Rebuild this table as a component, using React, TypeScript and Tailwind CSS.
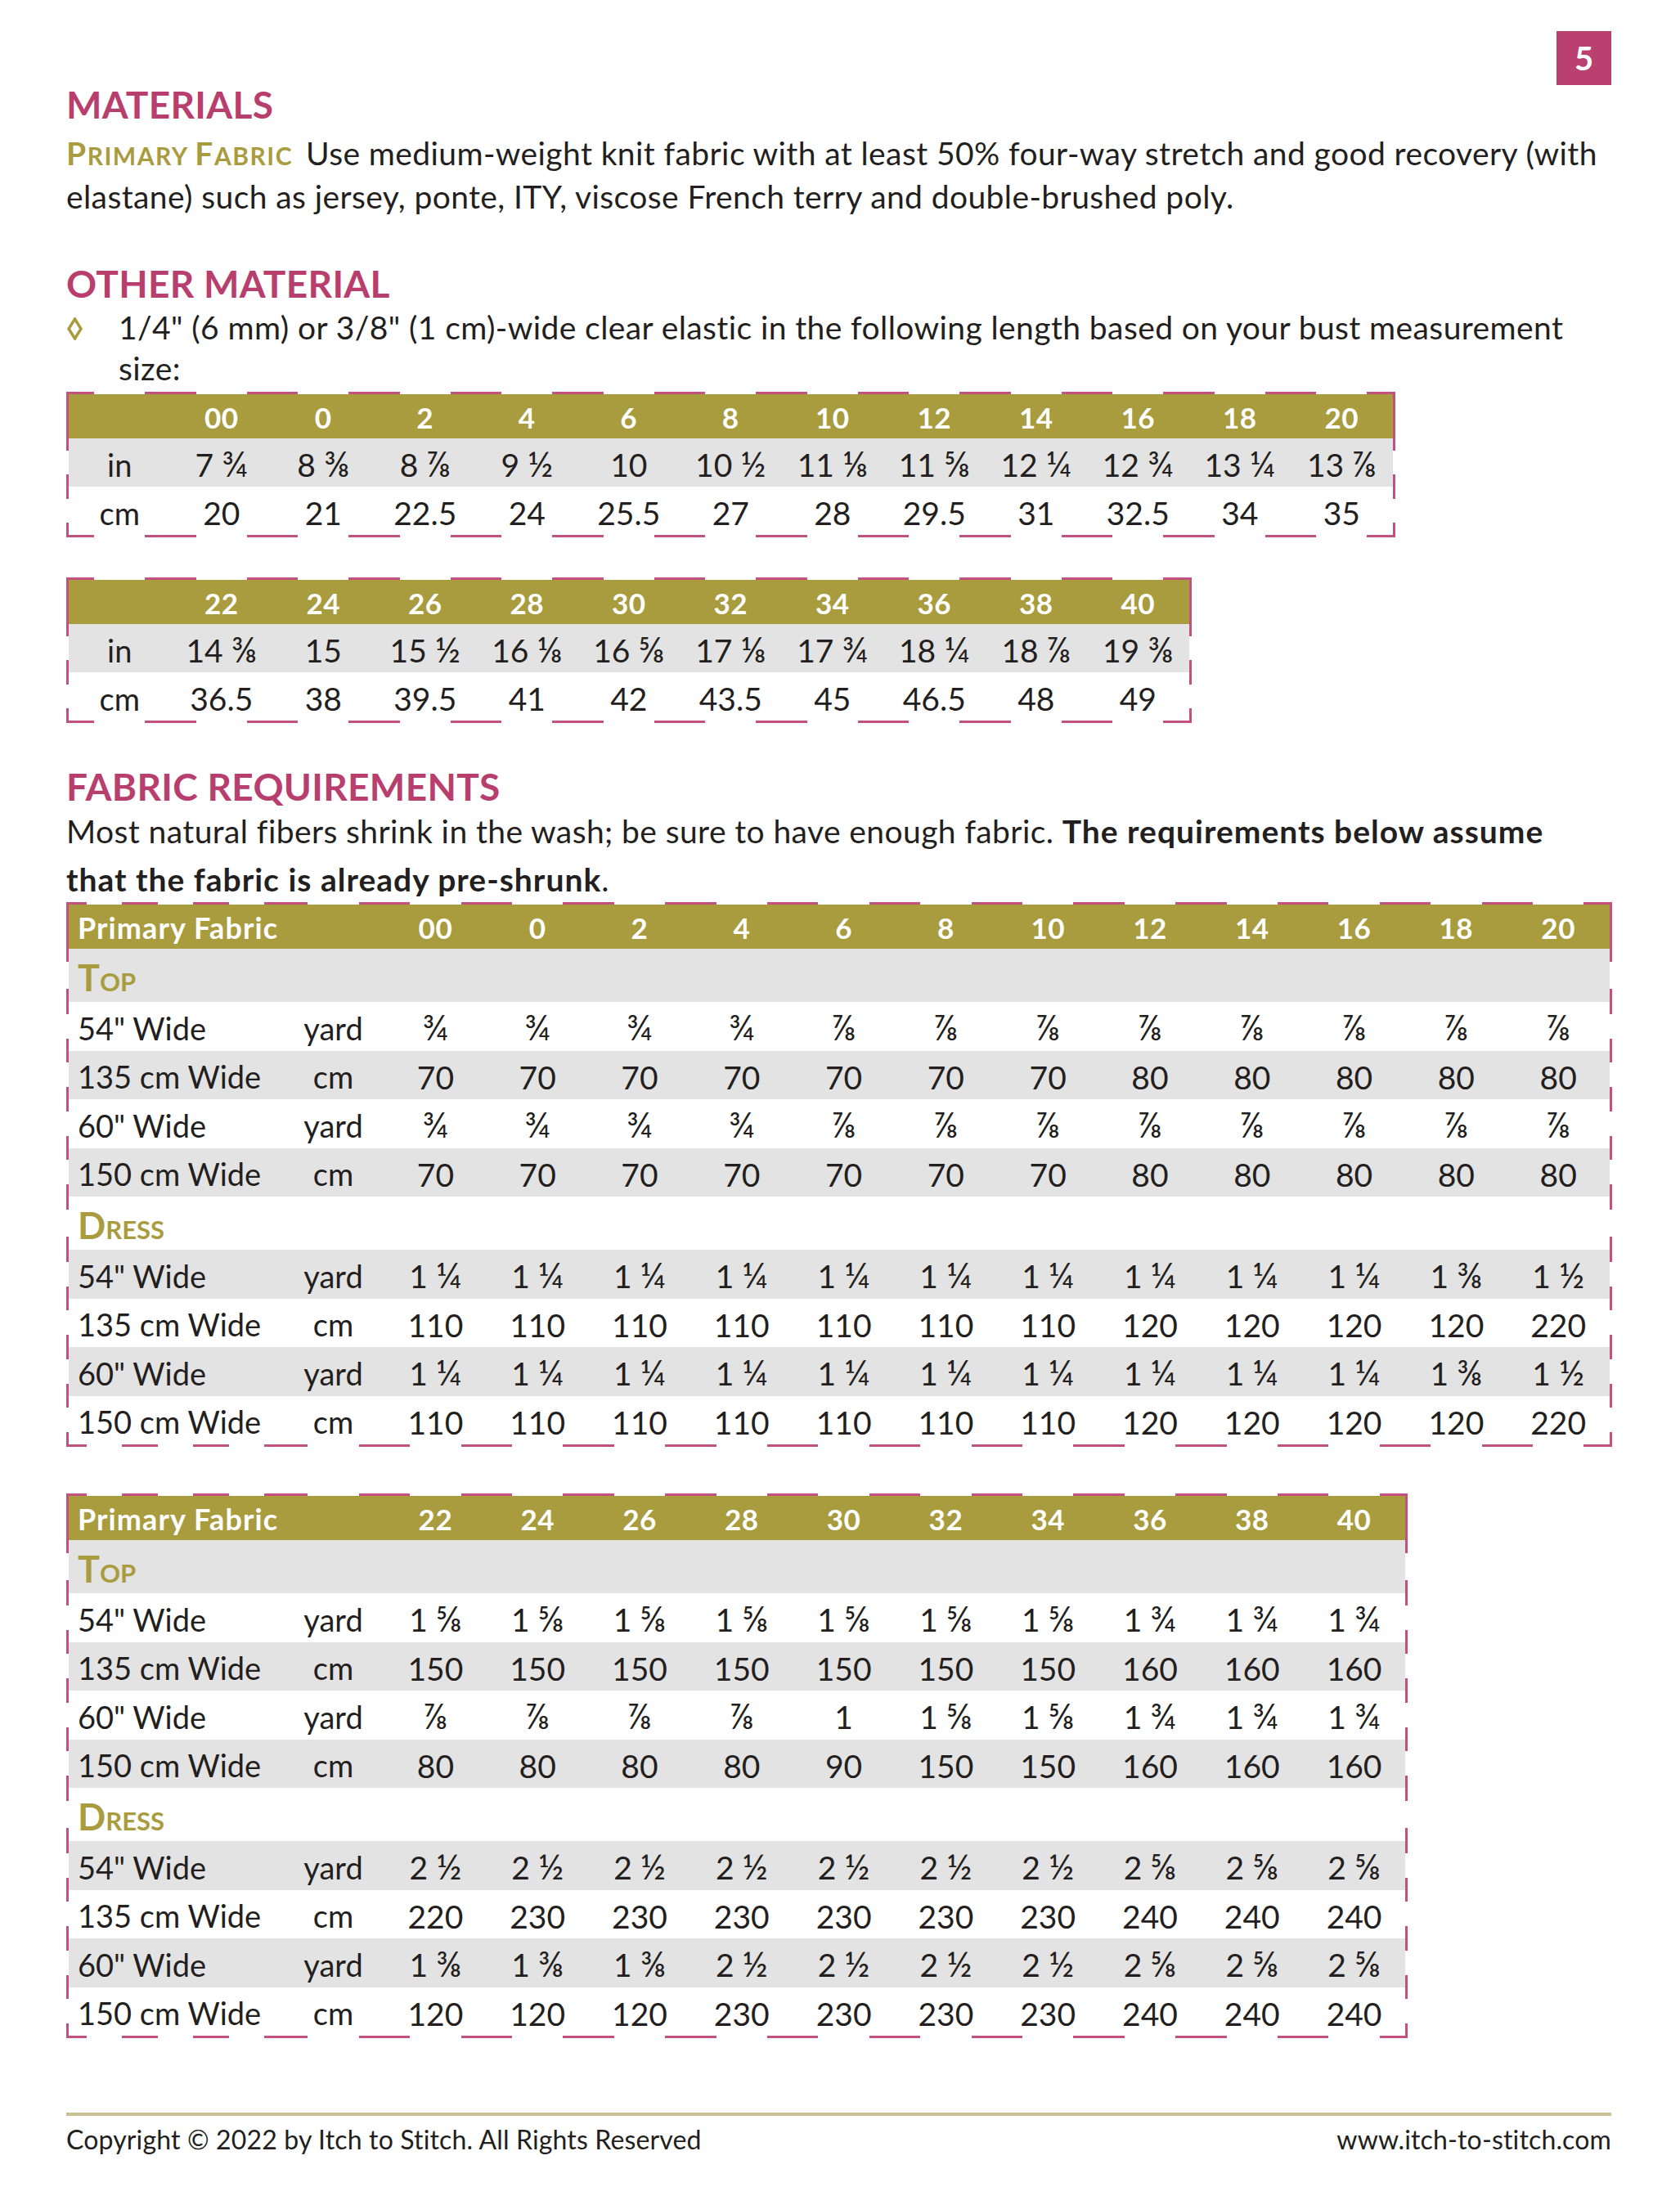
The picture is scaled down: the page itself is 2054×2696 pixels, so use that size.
import React from "react";

const ELASTIC_A = {
  sizes: ["00", "0", "2", "4", "6", "8", "10", "12", "14", "16", "18", "20"],
  inch: ["7 ¾", "8 ⅜", "8 ⅞", "9 ½", "10", "10 ½", "11 ⅛", "11 ⅝", "12 ¼", "12 ¾", "13 ¼", "13 ⅞"],
  cm: ["20", "21", "22.5", "24", "25.5", "27", "28", "29.5", "31", "32.5", "34", "35"],
};

const ELASTIC_B = {
  sizes: ["22", "24", "26", "28", "30", "32", "34", "36", "38", "40"],
  inch: ["14 ⅜", "15", "15 ½", "16 ⅛", "16 ⅝", "17 ⅛", "17 ¾", "18 ¼", "18 ⅞", "19 ⅜"],
  cm: ["36.5", "38", "39.5", "41", "42", "43.5", "45", "46.5", "48", "49"],
};

const rep = (v: string, n: number) => Array(n).fill(v) as string[];

type Section = { name: [string, string]; rows: { label: string; unit: string; values: string[] }[] };

const FABRIC_A: { sizes: string[]; sections: Section[] } = {
  sizes: ELASTIC_A.sizes,
  sections: [
    {
      name: ["T", "op"],
      rows: [
        { label: '54" Wide', unit: "yard", values: [...rep("¾", 4), ...rep("⅞", 8)] },
        { label: "135 cm Wide", unit: "cm", values: [...rep("70", 7), ...rep("80", 5)] },
        { label: '60" Wide', unit: "yard", values: [...rep("¾", 4), ...rep("⅞", 8)] },
        { label: "150 cm Wide", unit: "cm", values: [...rep("70", 7), ...rep("80", 5)] },
      ],
    },
    {
      name: ["D", "ress"],
      rows: [
        { label: '54" Wide', unit: "yard", values: [...rep("1 ¼", 10), "1 ⅜", "1 ½"] },
        { label: "135 cm Wide", unit: "cm", values: [...rep("110", 7), ...rep("120", 4), "220"] },
        { label: '60" Wide', unit: "yard", values: [...rep("1 ¼", 10), "1 ⅜", "1 ½"] },
        { label: "150 cm Wide", unit: "cm", values: [...rep("110", 7), ...rep("120", 4), "220"] },
      ],
    },
  ],
};

const FABRIC_B: { sizes: string[]; sections: Section[] } = {
  sizes: ELASTIC_B.sizes,
  sections: [
    {
      name: ["T", "op"],
      rows: [
        { label: '54" Wide', unit: "yard", values: [...rep("1 ⅝", 7), ...rep("1 ¾", 3)] },
        { label: "135 cm Wide", unit: "cm", values: [...rep("150", 7), ...rep("160", 3)] },
        { label: '60" Wide', unit: "yard", values: [...rep("⅞", 4), "1", "1 ⅝", "1 ⅝", ...rep("1 ¾", 3)] },
        { label: "150 cm Wide", unit: "cm", values: [...rep("80", 4), "90", "150", "150", ...rep("160", 3)] },
      ],
    },
    {
      name: ["D", "ress"],
      rows: [
        { label: '54" Wide', unit: "yard", values: [...rep("2 ½", 7), ...rep("2 ⅝", 3)] },
        { label: "135 cm Wide", unit: "cm", values: ["220", ...rep("230", 6), ...rep("240", 3)] },
        { label: '60" Wide', unit: "yard", values: [...rep("1 ⅜", 3), ...rep("2 ½", 4), ...rep("2 ⅝", 3)] },
        { label: "150 cm Wide", unit: "cm", values: [...rep("120", 3), ...rep("230", 4), ...rep("240", 3)] },
      ],
    },
  ],
};

// vulgar fraction glyphs are drawn a little small in Lato, bump them up
function Num({ v }: { v: string }) {
  const parts = v.split(/([¼½¾⅛⅜⅝⅞])/);
  return (
    <>
      {parts.map((p, i) =>
        /[¼½¾⅛⅜⅝⅞]/.test(p) ? (
          <span key={i} className="text-[1.1em] leading-none">
            {p}
          </span>
        ) : (
          p
        )
      )}
    </>
  );
}

// dashed frame pieces: each cell edge shows pink on its outer quarters
function HDash({ cols }: { cols: string[] }) {
  return (
    <div className="flex h-[3px]">
      <div className="w-[3px] shrink-0 bg-[#c2517f]" />
      {cols.map((c, i) => (
        <div key={i} className={`${c} shrink-0 flex justify-between`}>
          <div className="w-1/4 bg-[#c2517f]" />
          <div className="w-1/4 bg-[#c2517f]" />
        </div>
      ))}
      <div className="w-[3px] shrink-0 bg-[#c2517f]" />
    </div>
  );
}

function VEdge({ full }: { full?: boolean }) {
  if (full) return <div className="w-[3px] shrink-0 bg-[#c2517f]" />;
  return (
    <div className="w-[3px] shrink-0 flex flex-col justify-between">
      <div className="h-1/4 bg-[#c2517f]" />
      <div className="h-1/4 bg-[#c2517f]" />
    </div>
  );
}

function Row({ h, bg, full, children }: { h: string; bg: string; full?: boolean; children: React.ReactNode }) {
  return (
    <div className={`flex ${h}`}>
      <VEdge full={full} />
      <div className={`flex items-center ${bg}`}>{children}</div>
      <VEdge full={full} />
    </div>
  );
}

function ElasticTable({ data }: { data: typeof ELASTIC_A }) {
  const cols = rep("w-[124.5px]", data.sizes.length + 1);
  return (
    <div className="w-fit">
      <HDash cols={cols} />
      <Row h="h-[54px]" bg="bg-[#a99c3e]" full>
        <div className="w-[124.5px] shrink-0" />
        {data.sizes.map((s) => (
          <div
            key={s}
            className="w-[124.5px] shrink-0 pt-[2px] text-center text-[35px] tracking-[0.5px] font-bold text-white"
          >
            {s}
          </div>
        ))}
      </Row>
      <Row h="h-[59px]" bg="bg-[#e3e3e3]">
        <div className="w-[124.5px] shrink-0 pt-[5px] text-center text-[38px]">in</div>
        {data.inch.map((v, i) => (
          <div key={i} className="w-[124.5px] shrink-0 pt-[5px] text-center text-[39px]">
            <Num v={v} />
          </div>
        ))}
      </Row>
      <Row h="h-[59px]" bg="bg-white">
        <div className="w-[124.5px] shrink-0 pt-[5px] text-center text-[38px]">cm</div>
        {data.cm.map((v, i) => (
          <div key={i} className="w-[124.5px] shrink-0 pt-[5px] text-center text-[39px]">
            {v}
          </div>
        ))}
      </Row>
      <HDash cols={cols} />
    </div>
  );
}

function FabricTable({ data }: { data: typeof FABRIC_A }) {
  const cols = ["w-[87px]", "w-[87px]", "w-[87px]", "w-[125px]", ...rep("w-[124.8px]", data.sizes.length)];
  const sectionW = data.sizes.length === 12 ? "w-[1883.6px]" : "w-[1634px]";
  let stripe = 0;
  return (
    <div className="w-fit">
      <HDash cols={cols} />
      <Row h="h-[54px]" bg="bg-[#a99c3e]" full>
        <div className="w-[386px] shrink-0 pt-[2px] pl-[11px] text-[36px] tracking-[1.1px] font-bold text-white">
          Primary Fabric
        </div>
        {data.sizes.map((s) => (
          <div
            key={s}
            className="w-[124.8px] shrink-0 pt-[2px] text-center text-[35px] tracking-[0.5px] font-bold text-white"
          >
            {s}
          </div>
        ))}
      </Row>
      {data.sections.map((sec) => (
        <React.Fragment key={sec.name.join("")}>
          <Row h="h-[65px]" bg={stripe++ % 2 === 0 ? "bg-[#e3e3e3]" : "bg-white"}>
            <div className={`${sectionW} shrink-0 pt-[5px] pl-[11px] font-bold uppercase text-[#a99c3e] leading-none`}>
              <span className="text-[45px]">{sec.name[0]}</span>
              <span className="text-[31px]">{sec.name[1]}</span>
            </div>
          </Row>
          {sec.rows.map((r) => (
            <Row key={r.label} h="h-[59.5px]" bg={stripe++ % 2 === 0 ? "bg-[#e3e3e3]" : "bg-white"}>
              <div className="w-[261px] shrink-0 pt-[5px] pl-[11px] text-[38px]">{r.label}</div>
              <div className="w-[125px] shrink-0 pt-[5px] text-center text-[38px]">{r.unit}</div>
              {r.values.map((v, i) => (
                <div key={i} className="w-[124.8px] shrink-0 pt-[5px] text-center text-[39px]">
                  <Num v={v} />
                </div>
              ))}
            </Row>
          ))}
        </React.Fragment>
      ))}
      <HDash cols={cols} />
    </div>
  );
}

function Heading({ children, className = "" }: { children: React.ReactNode; className?: string }) {
  return (
    <h2 className={`text-[46px] leading-[50px] tracking-[0.3px] font-bold text-[#b83e6e] ${className}`}>{children}</h2>
  );
}

export default function App() {
  return (
    <div className="w-[2054px] min-h-[2696px] bg-white pl-[81px] pr-[84px] font-['Lato',sans-serif] text-[#231f20]">
      {/* page number */}
      <div className="flex justify-end pt-[38px]">
        <div className="w-[67px] h-[66px] bg-[#b9406f] flex items-center justify-center text-white font-bold text-[40px]">
          5
        </div>
      </div>

      <Heading className="-mt-[1px]">MATERIALS</Heading>
      <p className="mt-[9px] text-[39px] leading-[50px] tracking-[0.4px] whitespace-nowrap">
        <span className="mr-[16px] font-bold text-[#a99c3e] uppercase tracking-[1.5px]">
          <span className="text-[39px]">P</span>
          <span className="text-[30px]">rimary </span>
          <span className="text-[39px]">F</span>
          <span className="text-[30px]">abric</span>
        </span>
        Use medium-weight knit fabric with at least 50% four-way stretch and good recovery (with
        <br />
        elastane) such as jersey, ponte, ITY, viscose French terry and double-brushed poly.
      </p>

      <Heading className="mt-[57px]">OTHER MATERIAL</Heading>
      <div className="mt-[3px] flex text-[39px] leading-[50px] tracking-[0.4px]">
        <div className="w-[64px] shrink-0 pt-[13px] pl-[1px]">
          <svg width="19" height="28" viewBox="0 0 19 28">
            <path d="M9.5 2 L17 14 L9.5 26 L2 14 Z" fill="none" stroke="#a99c3e" strokeWidth="3.5" />
          </svg>
        </div>
        <p className="whitespace-nowrap">
          1/4" (6 mm) or 3/8" (1 cm)-wide clear elastic in the following length based on your bust measurement
          <br />
          size:
        </p>
      </div>

      <div className="mt-[4px]">
        <ElasticTable data={ELASTIC_A} />
      </div>
      <div className="mt-[49px]">
        <ElasticTable data={ELASTIC_B} />
      </div>

      <Heading className="mt-[53px]">FABRIC REQUIREMENTS</Heading>
      <p className="text-[39px] leading-[59px] tracking-[0.4px] whitespace-nowrap">
        Most natural fibers shrink in the wash; be sure to have enough fabric.{" "}
        <b className="tracking-[1px]">The requirements below assume</b>
        <br />
        <b className="tracking-[1px]">that the fabric is already pre-shrunk</b>.
      </p>

      <div className="-mt-[2px]">
        <FabricTable data={FABRIC_A} />
      </div>
      <div className="mt-[57px]">
        <FabricTable data={FABRIC_B} />
      </div>

      {/* footer */}
      <div className="mt-[91px] h-[4px] bg-[#c9c193]" />
      <div className="mt-[9px] flex justify-between text-[32px] leading-[40px] tracking-[0.15px]">
        <span>Copyright © 2022 by Itch to Stitch. All Rights Reserved</span>
        <span>www.itch-to-stitch.com</span>
      </div>
    </div>
  );
}
